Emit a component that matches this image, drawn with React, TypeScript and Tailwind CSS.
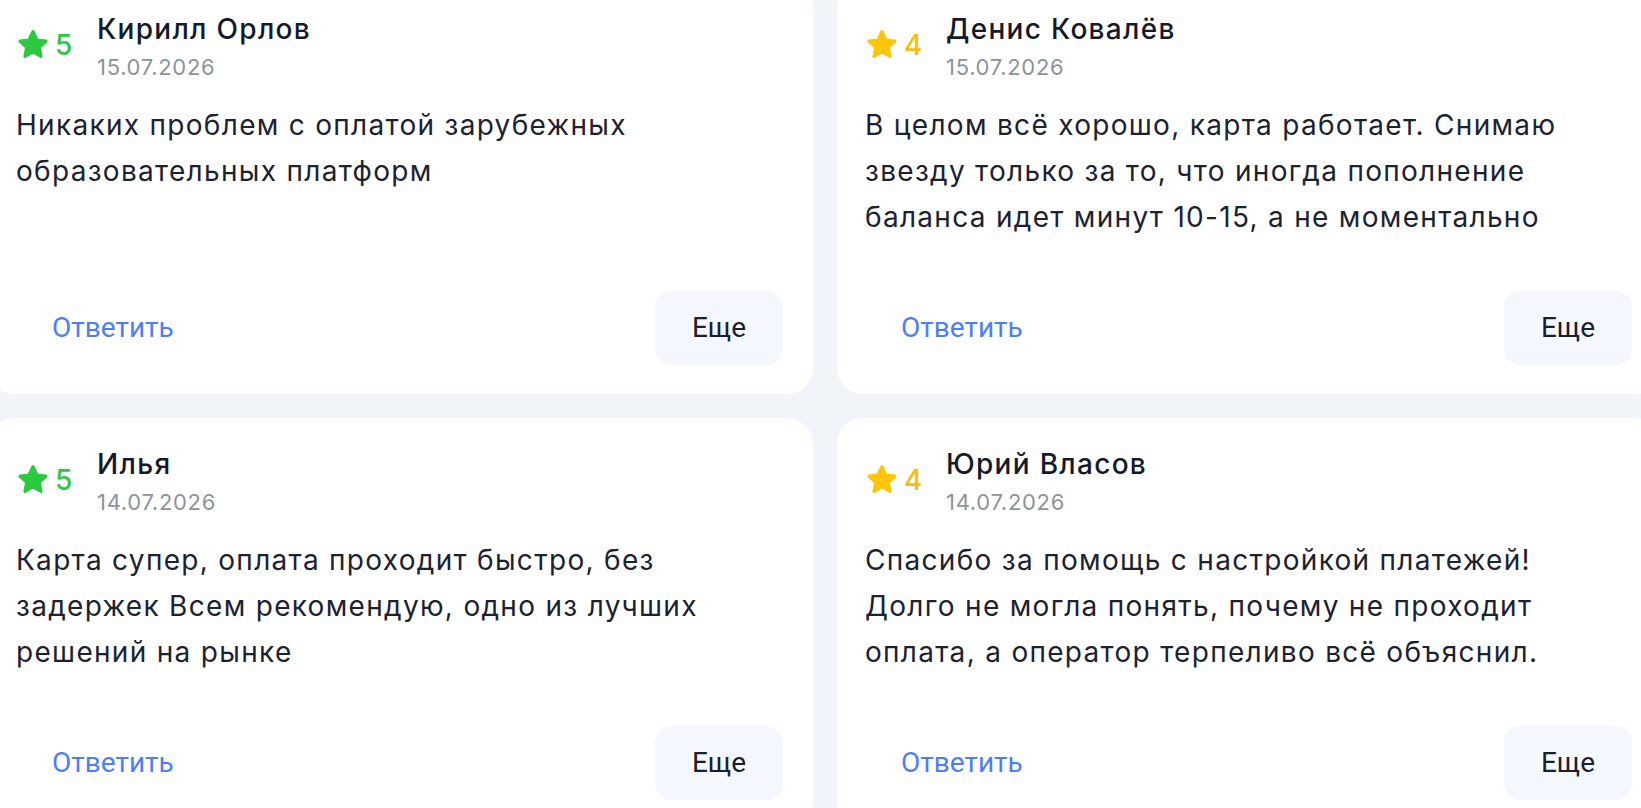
import React from "react";

type Review = {
  rating: number;
  name: string;
  date: string;
  text: string;
};

const reviews: Review[] = [
  {
    rating: 5,
    name: "Кирилл Орлов",
    date: "15.07.2026",
    text: "Никаких проблем с оплатой зарубежных образовательных платформ",
  },
  {
    rating: 4,
    name: "Денис Ковалёв",
    date: "15.07.2026",
    text: "В целом всё хорошо, карта работает. Снимаю звезду только за то, что иногда пополнение баланса идет минут 10-15, а не моментально",
  },
  {
    rating: 5,
    name: "Илья",
    date: "14.07.2026",
    text: "Карта супер, оплата проходит быстро, без задержек Всем рекомендую, одно из лучших решений на рынке",
  },
  {
    rating: 4,
    name: "Юрий Власов",
    date: "14.07.2026",
    text: "Спасибо за помощь с настройкой платежей! Долго не могла понять, почему не проходит оплата, а оператор терпеливо всё объяснил.",
  },
];

function Star({ color }: { color: string }) {
  return (
    <svg width="36" height="36" viewBox="0 0 24 24" aria-hidden="true">
      <path
        d="M12 3.2l2.6 5.5 6 .75-4.45 4.15 1.15 5.95L12 16.6l-5.3 2.95 1.15-5.95L3.4 9.45l6-.75z"
        fill={color}
        stroke={color}
        strokeWidth="2.2"
        strokeLinejoin="round"
      />
    </svg>
  );
}

function Card({ r }: { r: Review }) {
  const good = r.rating >= 5;
  return (
    <div className="h-[411px] rounded-[26px] bg-white flex flex-col pt-[28px] pb-[29px] pl-[28px] pr-[30px]">
      <div className="flex items-start">
        <div className="w-[81px] ml-[-1px] flex items-center gap-[4px] mt-[16px]">
          <Star color={good ? "#2bc940" : "#fdc60b"} />
          <span
            className={
              good
                ? "text-[28px] font-medium text-[#2bc940] leading-none"
                : "text-[28px] font-medium text-[#f9bd0c] leading-none"
            }
          >
            {r.rating}
          </span>
        </div>
        <div className="flex flex-col ml-[1px]">
          <div className="text-[28px] leading-[36px] font-medium text-[#141a28] tracking-[1.3px]">
            {r.name}
          </div>
          <div className="mt-[6px] text-[22px] leading-[28px] text-[#8d939c] tracking-[0.7px]">
            {r.date}
          </div>
        </div>
      </div>
      <p className="mt-[21px] text-[28px] leading-[46px] text-[#1c2230] tracking-[1.3px] max-w-[740px]">
        {r.text}
      </p>
      <div className="mt-auto flex items-center justify-between">
        <button className="pl-[36px] h-[74px] text-[28px] text-[#4d7dff] font-['Roboto',sans-serif] bg-transparent">
          Ответить
        </button>
        <button className="w-[128px] h-[74px] rounded-[16px] bg-[#f4f7fe] text-[28px] text-[#1a1f2c] font-['Roboto',sans-serif]">
          Еще
        </button>
      </div>
    </div>
  );
}

export default function App() {
  return (
    <div className="w-[1641px] h-[808px] overflow-hidden bg-[#f1f4f8] font-['Inter',sans-serif]">
      <div className="ml-[-12px] mt-[-17px] grid grid-cols-[825px_825px] gap-x-[24px] gap-y-[24px]">
        {reviews.map((r) => (
          <Card key={r.name} r={r} />
        ))}
      </div>
    </div>
  );
}
